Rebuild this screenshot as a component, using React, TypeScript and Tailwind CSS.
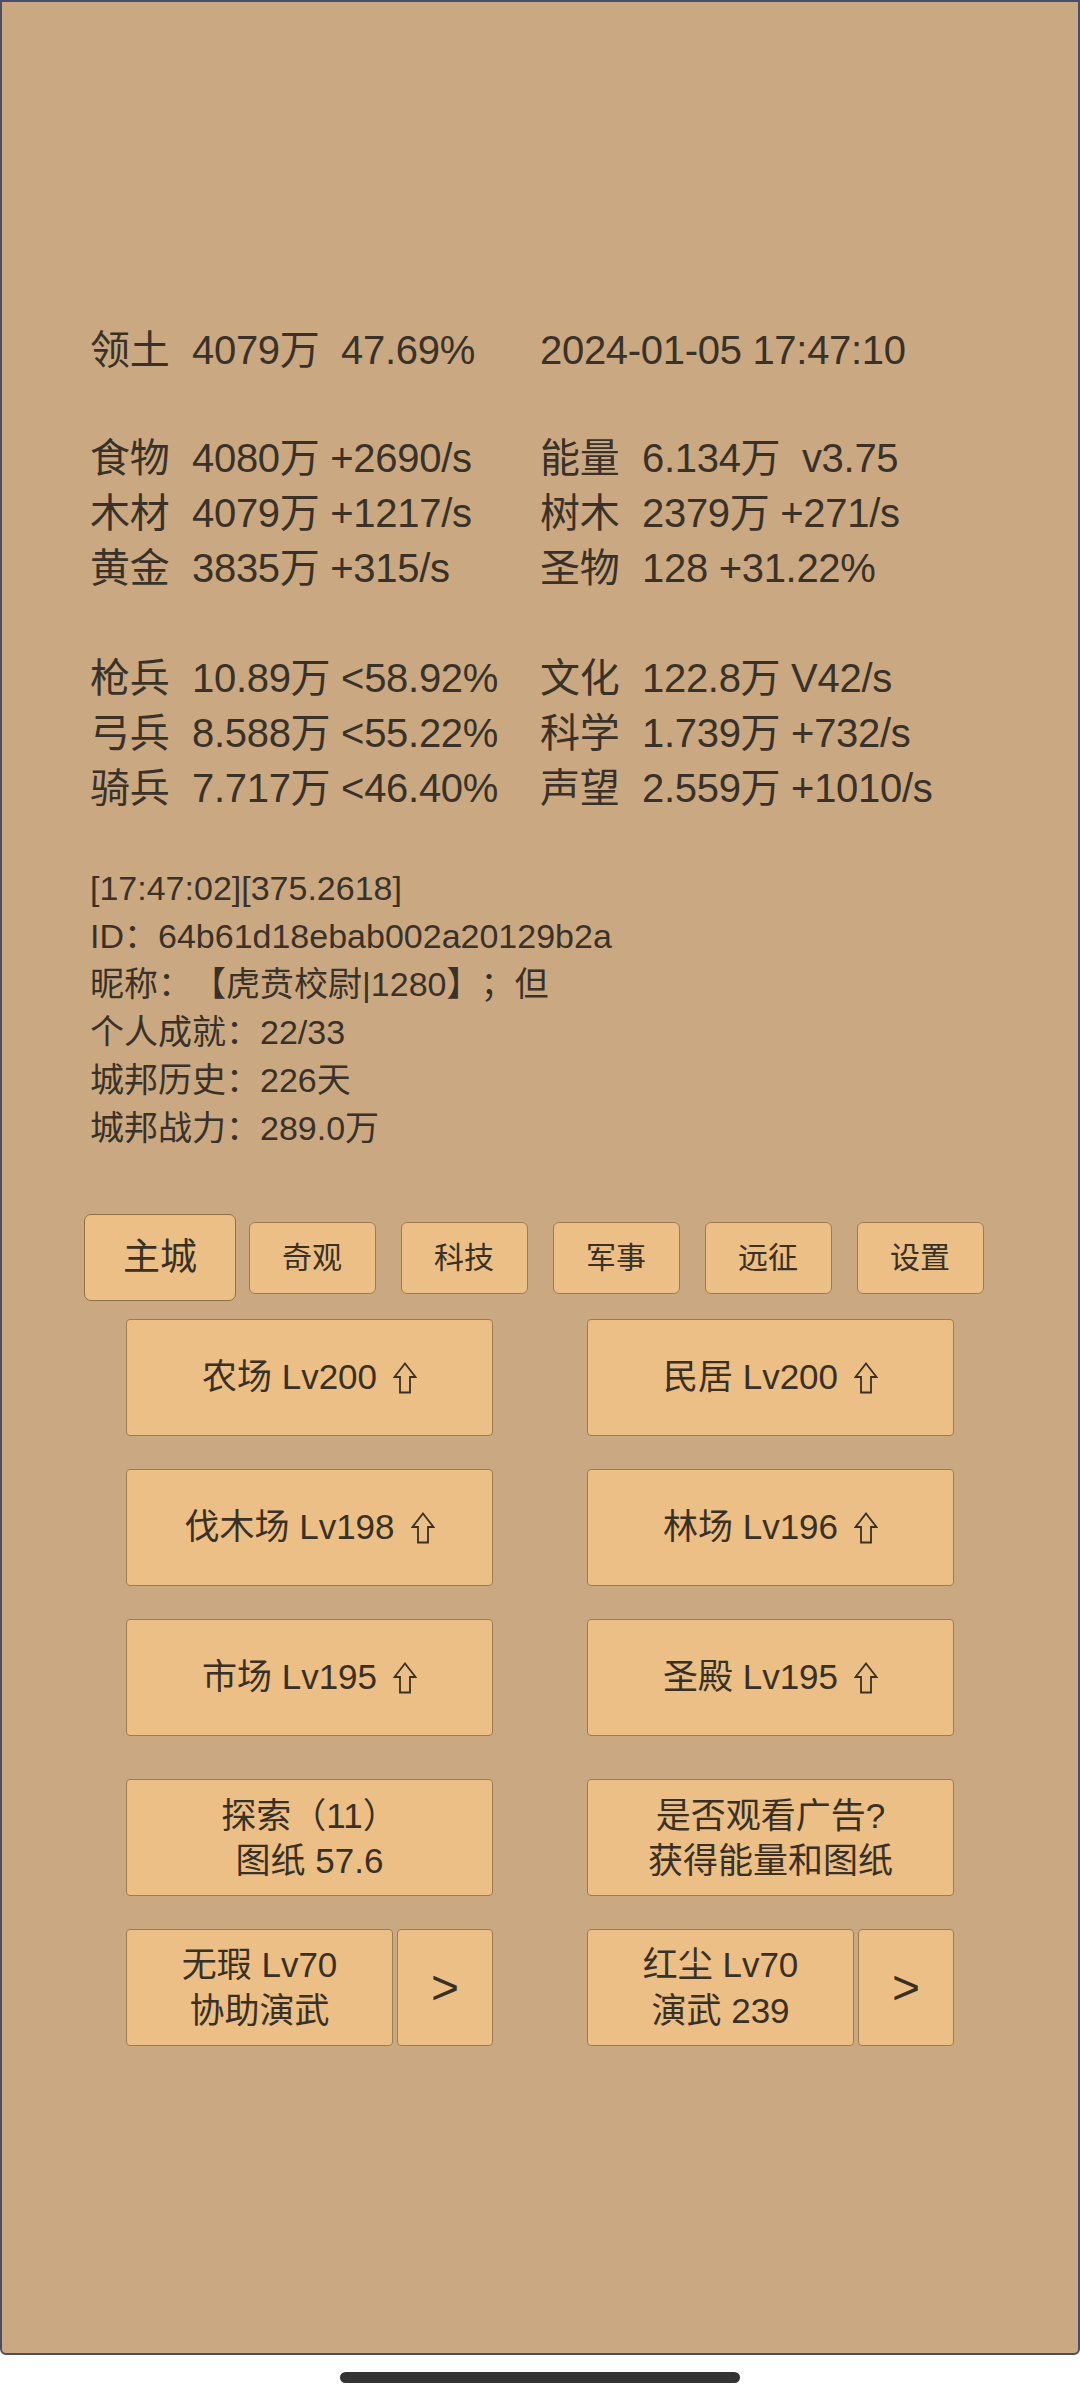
const font = { fontFamily: '"Liberation Sans", "Noto Sans CJK SC", sans-serif' };

type Cell = { label: string; text: string };

const groups: Cell[][][] = [
  [[{ label: '领土', text: '4079万  47.69%' }, { label: '', text: '2024-01-05 17:47:10' }]],
  [
    [{ label: '食物', text: '4080万 +2690/s' }, { label: '能量', text: '6.134万  v3.75' }],
    [{ label: '木材', text: '4079万 +1217/s' }, { label: '树木', text: '2379万 +271/s' }],
    [{ label: '黄金', text: '3835万 +315/s' }, { label: '圣物', text: '128 +31.22%' }],
  ],
  [
    [{ label: '枪兵', text: '10.89万 <58.92%' }, { label: '文化', text: '122.8万 V42/s' }],
    [{ label: '弓兵', text: '8.588万 <55.22%' }, { label: '科学', text: '1.739万 +732/s' }],
    [{ label: '骑兵', text: '7.717万 <46.40%' }, { label: '声望', text: '2.559万 +1010/s' }],
  ],
];

const info = [
  '[17:47:02][375.2618]',
  'ID：64b61d18ebab002a20129b2a',
  '昵称：【虎贲校尉|1280】；但',
  '个人成就：22/33',
  '城邦历史：226天',
  '城邦战力：289.0万',
];

const tabs = ['主城', '奇观', '科技', '军事', '远征', '设置'];

const buildings = [
  ['农场 Lv200', '民居 Lv200'],
  ['伐木场 Lv198', '林场 Lv196'],
  ['市场 Lv195', '圣殿 Lv195'],
];

function UpArrow() {
  return (
    <svg width="24" height="32" viewBox="0 0 24 32" className="ml-[16px] shrink-0">
      <path
        d="M12 1.5 L22.5 15 H17 V30.5 H7 V15 H1.5 Z"
        fill="none"
        stroke="#3a3025"
        strokeWidth={1.8}
        strokeLinejoin="miter"
      />
    </svg>
  );
}

const btn = 'bg-[#ebbf85] border-[1.5px] border-[#9d7c52] rounded-[4px] text-[#3a3025]';

function StatCell({ cell }: { cell: Cell }) {
  return (
    <div className="flex whitespace-pre">
      {cell.label && <span className="w-[102px] shrink-0">{cell.label}</span>}
      <span>{cell.text}</span>
    </div>
  );
}

export default function App() {
  return (
    <div className="w-[1080px] h-[2400px] bg-white [text-spacing-trim:space-all]" style={font}>
      <div className="h-[2355px] border-2 border-[#4a4e68] rounded-b-[6px] bg-[#caa982] flex flex-col">
        {/* resource stats */}
        <div className="pt-[321px] pl-[88px] text-[40px] leading-[55px] tracking-[-0.3px] text-[#3a3129]">
          {groups.map((g, gi) => (
            <div key={gi} className={gi === 1 ? 'mt-[53px]' : gi === 2 ? 'mt-[55px]' : ''}>
              {g.map((row, ri) => (
                <div key={ri} className="grid grid-cols-[450px_450px]">
                  <StatCell cell={row[0]} />
                  <StatCell cell={row[1]} />
                </div>
              ))}
            </div>
          ))}
        </div>

        <div className="mt-[48px] pl-[88px] text-[34px] leading-[48px] text-[#3a3129]">
          {info.map((line) => (
            <div key={line}>{line}</div>
          ))}
        </div>

        {/* tabs */}
        <div className="mt-[62px] pl-[82px] flex">
          {tabs.map((t, i) => (
            <div key={t} className="w-[152px] h-[87px] flex items-center justify-center">
              {i === 0 ? (
                <div className="w-[152px] h-[87px] flex items-center justify-center bg-[#ebbf85] border-[1.5px] border-[#8f7049] rounded-[7px] text-[37px] text-[#3a3025]">
                  {t}
                </div>
              ) : (
                <div className="w-[127px] h-[72px] flex items-center justify-center bg-[#ebbf85] border-[1.5px] border-[#9d7c52] rounded-[6px] text-[30px] text-[#3a3025]">
                  {t}
                </div>
              )}
            </div>
          ))}
        </div>

        {/* buildings */}
        <div className="mt-[18px] pl-[124px] flex flex-col gap-[33px]">
          {buildings.map((row, ri) => (
            <div key={ri} className="flex gap-[94px]">
              {row.map((b) => (
                <div key={b} className={`${btn} w-[367px] h-[117px] flex items-center justify-center text-[35px]`}>
                  <span>{b}</span>
                  <UpArrow />
                </div>
              ))}
            </div>
          ))}
        </div>

        <div className="mt-[43px] pl-[124px] flex gap-[94px]">
          <div className={`${btn} w-[367px] h-[117px] flex flex-col items-center justify-center text-[35px] leading-[45px]`}>
            <div>探索（11）</div>
            <div>图纸 57.6</div>
          </div>
          <div className={`${btn} w-[367px] h-[117px] flex flex-col items-center justify-center text-[35px] leading-[45px]`}>
            <div>是否观看广告?</div>
            <div>获得能量和图纸</div>
          </div>
        </div>

        <div className="mt-[33px] pl-[124px] flex gap-[94px]">
          {[
            ['无瑕 Lv70', '协助演武'],
            ['红尘 Lv70', '演武 239'],
          ].map(([a, b]) => (
            <div key={a} className="w-[367px] flex gap-[4px]">
              <div className={`${btn} w-[267px] h-[117px] flex flex-col items-center justify-center text-[35px] leading-[46px]`}>
                <div>{a}</div>
                <div>{b}</div>
              </div>
              <div className={`${btn} w-[96px] h-[117px] flex items-center justify-center text-[48px]`}>
                &gt;
              </div>
            </div>
          ))}
        </div>
      </div>

      <div className="mt-[17px] mx-auto w-[400px] h-[11px] rounded-full bg-[#333333]" />
    </div>
  );
}
